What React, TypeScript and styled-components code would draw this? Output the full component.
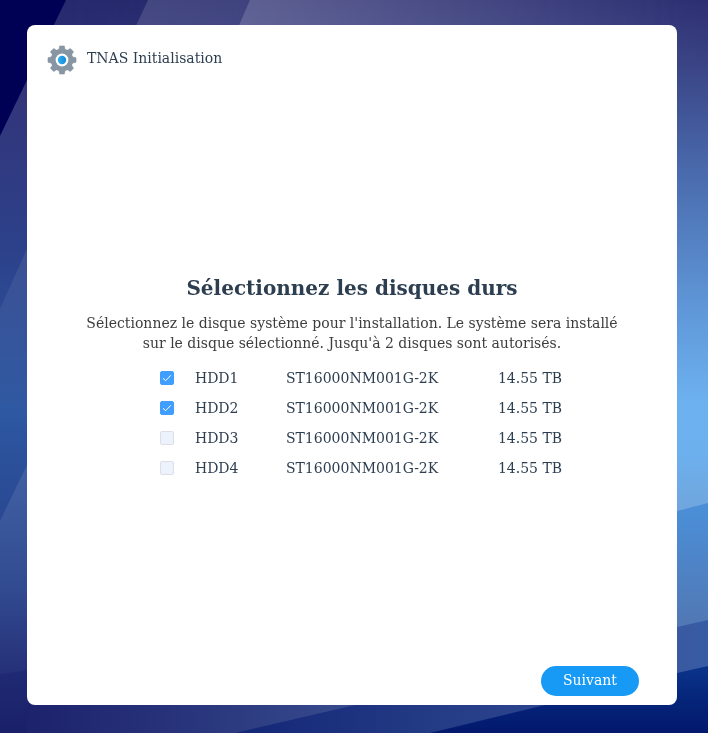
import React, { useState } from "react";
import styled, { createGlobalStyle } from "styled-components";

const GlobalStyle = createGlobalStyle`
  * { box-sizing: border-box; }
  body {
    margin: 0;
    background: #1a2169;
    color: #2c3e50;
    font-family: "DejaVu Serif", serif;
    font-size: 14px;
    line-height: 20px;
  }
`;

const Page = styled.div`
  min-height: 100vh;
  display: flex;
  padding: 25px 31px 28px 27px;
`;

const Backdrop = styled.svg`
  position: fixed;
  inset: 0;
  width: 100%;
  height: 100%;
  z-index: -1;
`;

const Panel = styled.div`
  flex: 1;
  min-width: 0;
  display: flex;
  flex-direction: column;
  background: #fff;
  border-radius: 8px;
`;

const Header = styled.header`
  display: flex;
  align-items: flex-start;
  gap: 10px;
  padding: 20px 20px 0;
`;

const GearIcon = styled.svg`
  width: 30px;
  height: 30px;
`;

const AppName = styled.span`
  padding-top: 3px;
`;

const Content = styled.main`
  flex: 1;
  display: flex;
  flex-direction: column;
  align-items: center;
  justify-content: center;
  padding: 14px 50px 0;
`;

const Title = styled.h1`
  margin: 0 0 10px;
  font-size: 20px;
  line-height: 30px;
  font-weight: 700;
`;

const Hint = styled.p`
  margin: 0 0 10px;
  max-width: 550px;
  color: #3d3d3d;
  text-align: center;
`;

const DiskTable = styled.table`
  margin-left: 18px;
  border-collapse: collapse;
`;

const DiskRow = styled.tr`
  height: 30px;
`;

const Cell = styled.td<{ $width: number }>`
  width: ${(p) => p.$width}px;
  padding: 0;
  white-space: nowrap;
`;

const CheckBox = styled.span`
  display: grid;
  width: 14px;
  height: 14px;
`;

const CheckInput = styled.input`
  grid-area: 1 / 1;
  appearance: none;
  width: 14px;
  height: 14px;
  margin: 0;
  border: 1px solid #dcdfe6;
  border-radius: 2px;
  background: #fff;

  &:checked {
    background: #409eff;
    border-color: #409eff;
  }
  &:disabled {
    background: #edf2fc;
  }
`;

const CheckMark = styled.svg`
  grid-area: 1 / 1;
  width: 14px;
  height: 14px;
  pointer-events: none;
`;

const Footer = styled.footer`
  display: flex;
  justify-content: flex-end;
  padding: 0 38px 9px;
`;

const NextButton = styled.button`
  min-width: 98px;
  height: 30px;
  padding: 0 20px 2px;
  border: 0;
  border-radius: 15px;
  background: #169af5;
  color: #fff;
  font: inherit;
  cursor: pointer;
`;

const disks = ["HDD1", "HDD2", "HDD3", "HDD4"].map((name) => ({
  name,
  model: "ST16000NM001G-2K",
  size: "14.55 TB",
}));

const MAX_DISKS = 2;

function Wallpaper() {
  return (
    <Backdrop viewBox="0 0 708 733" preserveAspectRatio="none" aria-hidden="true">
      <defs>
        <linearGradient id="left" x1="0" y1="0" x2="0" y2="1">
          <stop offset="0" stopColor="#262a6d" />
          <stop offset=".13" stopColor="#33357a" />
          <stop offset=".34" stopColor="#2c418a" />
          <stop offset=".56" stopColor="#2d58a2" />
          <stop offset=".66" stopColor="#2b4d97" />
          <stop offset=".8" stopColor="#25408a" />
          <stop offset=".92" stopColor="#1f2a74" />
          <stop offset="1" stopColor="#1a2068" />
        </linearGradient>
        <linearGradient id="right" x1="0" y1="0" x2="0" y2="1">
          <stop offset="0" stopColor="#2d2f72" />
          <stop offset=".08" stopColor="#394283" />
          <stop offset=".24" stopColor="#4a6cae" />
          <stop offset=".42" stopColor="#5f97d8" />
          <stop offset=".55" stopColor="#6db1f0" />
          <stop offset=".62" stopColor="#6db0ee" />
          <stop offset=".7" stopColor="#70a5dc" />
        </linearGradient>
        <linearGradient id="fade">
          <stop offset=".1" stopColor="#000" />
          <stop offset=".96" stopColor="#fff" />
        </linearGradient>
        <mask id="rightMask">
          <rect width="708" height="733" fill="url(#fade)" />
        </mask>
        <linearGradient id="rayA" gradientUnits="userSpaceOnUse" x1="120" y1="0" x2="708" y2="0">
          <stop offset="0" stopColor="#fff" stopOpacity=".14" />
          <stop offset="1" stopColor="#fff" stopOpacity="0" />
        </linearGradient>
        <linearGradient id="rayASide" gradientUnits="userSpaceOnUse" x1="0" y1="210" x2="0" y2="430">
          <stop offset="0" stopColor="#fff" stopOpacity=".1" />
          <stop offset="1" stopColor="#fff" stopOpacity="0" />
        </linearGradient>
        <linearGradient id="rayB" gradientUnits="userSpaceOnUse" x1="240" y1="0" x2="690" y2="0">
          <stop offset="0" stopColor="#fff" stopOpacity=".16" />
          <stop offset="1" stopColor="#fff" stopOpacity="0" />
        </linearGradient>
        <linearGradient id="rayBSide" gradientUnits="userSpaceOnUse" x1="0" y1="465" x2="0" y2="670">
          <stop offset="0" stopColor="#fff" stopOpacity=".1" />
          <stop offset="1" stopColor="#fff" stopOpacity=".03" />
        </linearGradient>
        <linearGradient id="floor" gradientUnits="userSpaceOnUse" x1="20" y1="0" x2="355" y2="0">
          <stop offset="0" stopColor="#1c226b" />
          <stop offset=".5" stopColor="#28347b" />
          <stop offset="1" stopColor="#374c8d" />
        </linearGradient>
        <linearGradient id="bandTop" gradientUnits="userSpaceOnUse" x1="0" y1="508" x2="0" y2="624">
          <stop offset="0" stopColor="#4b8fd8" />
          <stop offset="1" stopColor="#5178b4" />
        </linearGradient>
        <linearGradient id="bandMid" gradientUnits="userSpaceOnUse" x1="240" y1="0" x2="708" y2="0">
          <stop offset="0" stopColor="#142778" />
          <stop offset=".25" stopColor="#1d337f" />
          <stop offset=".6" stopColor="#2b438c" />
          <stop offset=".93" stopColor="#3a59a1" />
          <stop offset="1" stopColor="#365ca5" />
        </linearGradient>
        <linearGradient id="bandLow" gradientUnits="userSpaceOnUse" x1="0" y1="670" x2="0" y2="733">
          <stop offset="0" stopColor="#093389" />
          <stop offset=".5" stopColor="#052479" />
          <stop offset="1" stopColor="#02196d" />
        </linearGradient>
      </defs>
      <rect width="708" height="733" fill="url(#left)" />
      <rect width="708" height="733" fill="url(#right)" mask="url(#rightMask)" />
      <path d="M0 0H66L27 80L0 136Z" fill="#000055" />
      <path d="M148 0H708V60H120Z" fill="url(#rayA)" />
      <path d="M250 0H708V60H224Z" fill="url(#rayB)" />
      <path d="M50 202V521H0V309L27 249Z" fill="url(#rayASide)" />
      <path d="M50 417V667L0 674V521L27 465Z" fill="url(#rayBSide)" />
      <path d="M27 690H500V733H27Z" fill="url(#floor)" />
      <path d="M650 518L708 503V630H650Z" fill="url(#bandTop)" />
      <path d="M235 733L355 705L677 627L708 620V733Z" fill="url(#bandMid)" />
      <path d="M430 733L545 705L677 673L708 666V733Z" fill="url(#bandLow)" />
    </Backdrop>
  );
}

function Gear() {
  return (
    <GearIcon viewBox="0 0 30 30" aria-hidden="true">
      <defs>
        <linearGradient id="hub">
          <stop offset="0" stopColor="#2fb0ea" />
          <stop offset="1" stopColor="#168bdc" />
        </linearGradient>
      </defs>
      <g fill="#8796a2">
        <circle cx="15" cy="15" r="11.2" />
        {[0, 45, 90, 135].map((angle) => (
          <path
            key={angle}
            d="M12.7 1H17.3L18.4 6V24L17.3 29H12.7L11.6 24V6Z"
            stroke="#8796a2"
            strokeWidth=".6"
            strokeLinejoin="round"
            transform={`rotate(${angle} 15 15)`}
          />
        ))}
      </g>
      <circle cx="15" cy="15" r="6.4" fill="#fff" />
      <circle cx="15" cy="15" r="4.2" fill="url(#hub)" />
    </GearIcon>
  );
}

export default function App() {
  const [selected, setSelected] = useState<string[]>(["HDD1", "HDD2"]);

  const toggle = (name: string) =>
    setSelected((current) =>
      current.includes(name) ? current.filter((n) => n !== name) : [...current, name]
    );

  return (
    <>
      <GlobalStyle />
      <Wallpaper />
      <Page>
        <Panel>
          <Header>
            <Gear />
            <AppName>TNAS Initialisation</AppName>
          </Header>
          <Content>
            <Title>Sélectionnez les disques durs</Title>
            <Hint>
              Sélectionnez le disque système pour l'installation. Le système sera installé sur le
              disque sélectionné. Jusqu'à 2 disques sont autorisés.
            </Hint>
            <DiskTable>
              <tbody>
                {disks.map((disk) => {
                  const checked = selected.includes(disk.name);
                  return (
                    <DiskRow key={disk.name}>
                      <Cell $width={35}>
                        <CheckBox>
                          <CheckInput
                            type="checkbox"
                            id={disk.name}
                            checked={checked}
                            disabled={!checked && selected.length >= MAX_DISKS}
                            onChange={() => toggle(disk.name)}
                          />
                          {checked && (
                            <CheckMark viewBox="0 0 14 14" aria-hidden="true">
                              <path d="M3 7.2L5.7 9.7L10.8 4.3" fill="none" stroke="#fff" />
                            </CheckMark>
                          )}
                        </CheckBox>
                      </Cell>
                      <Cell $width={91}>
                        <label htmlFor={disk.name}>{disk.name}</label>
                      </Cell>
                      <Cell $width={212}>{disk.model}</Cell>
                      <Cell $width={64}>{disk.size}</Cell>
                    </DiskRow>
                  );
                })}
              </tbody>
            </DiskTable>
          </Content>
          <Footer>
            <NextButton type="button">Suivant</NextButton>
          </Footer>
        </Panel>
      </Page>
    </>
  );
}
